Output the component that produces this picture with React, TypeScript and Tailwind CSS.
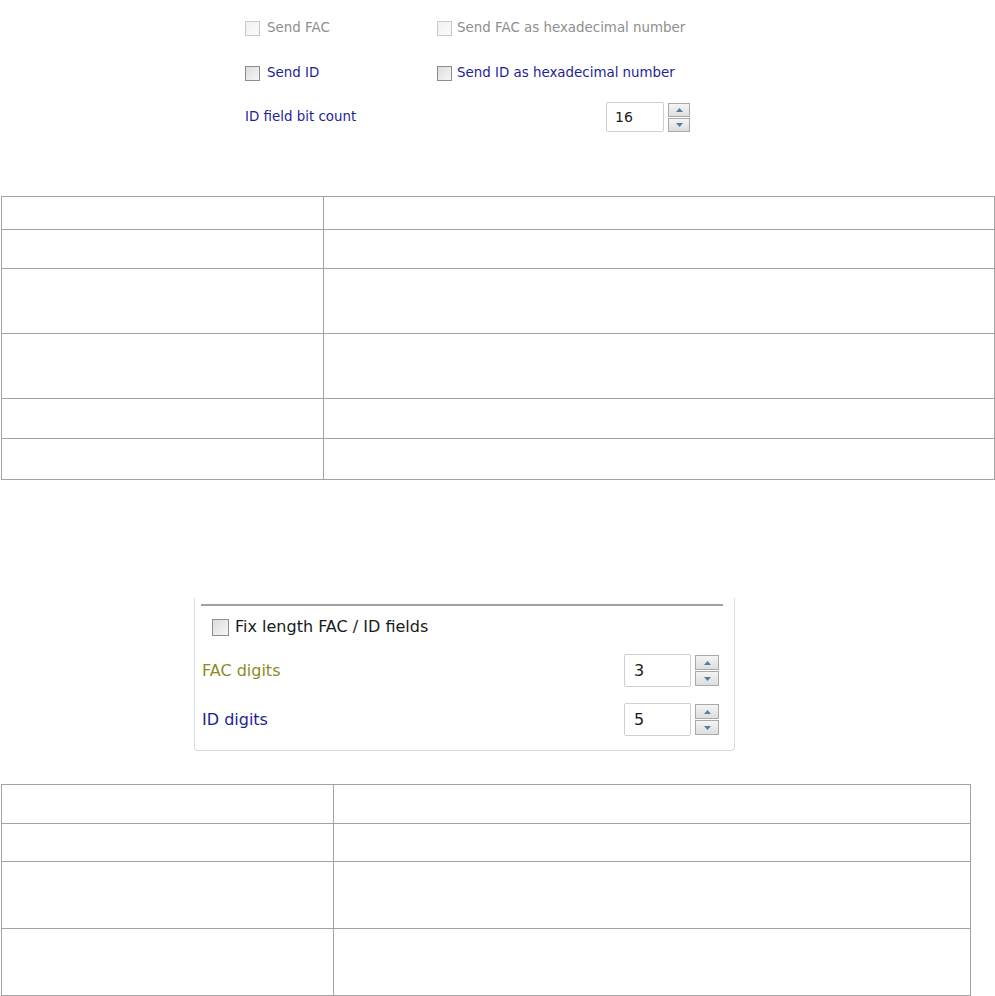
import React from "react";

const Checkbox = ({ disabled = false, big = false }: { disabled?: boolean; big?: boolean }) => (
  <span
    className={
      "inline-block shrink-0 border bg-gradient-to-br from-[#dcdcdc] to-[#f6f6f6] " +
      (big ? "w-[17px] h-[17px] " : "w-[15px] h-[15px] ") +
      (disabled ? "border-[#c8c8c8] from-[#f0f0f0] to-[#fbfbfb]" : "border-[#8e8e8e]")
    }
  />
);

const Arrow = ({ up }: { up?: boolean }) => (
  <svg width="7" height="4" viewBox="0 0 7 4">
    <path d={up ? "M0 4 L3.5 0 L7 4 Z" : "M0 0 L3.5 4 L7 0 Z"} fill="#5a78a8" />
  </svg>
);

const Spin = ({ value, big = false }: { value: string; big?: boolean }) => (
  <div className="flex items-center gap-[4px]">
    <div
      className={
        "flex items-center border border-[#cfcfcf] rounded-[2px] bg-white text-[#1a1a1a] " +
        (big ? "w-[67px] h-[33px] pl-[9px] text-[16px]" : "w-[58px] h-[30px] pl-[8px] text-[14px]")
      }
    >
      {value}
    </div>
    <div className="flex flex-col gap-[1px]">
      <div className={"flex items-center justify-center border border-[#a9a9a9] bg-gradient-to-b from-[#f4f4f4] to-[#dedede] " + (big ? "w-[24px] h-[15px]" : "w-[22px] h-[14px]")}>
        <Arrow up />
      </div>
      <div className={"flex items-center justify-center border border-[#a9a9a9] bg-gradient-to-b from-[#f4f4f4] to-[#dedede] " + (big ? "w-[24px] h-[15px]" : "w-[22px] h-[14px]")}>
        <Arrow />
      </div>
    </div>
  </div>
);

const Table = ({ heights, col, width }: { heights: number[]; col: number; width: number }) => (
  <table className="border-collapse table-fixed" style={{ width }}>
    <tbody>
      {heights.map((h, i) => (
        <tr key={i} style={{ height: h }}>
          <td className="border border-[#a3a3a3] p-0" style={{ width: col }} />
          <td className="border border-[#a3a3a3] p-0" />
        </tr>
      ))}
    </tbody>
  </table>
);

export default function App() {
  return (
    <div className="w-[995px] h-[996px] bg-white overflow-hidden" style={{ fontFamily: "'DejaVu Sans', Verdana, sans-serif" }}>
      <div className="pt-[19px] pl-[245px] text-[13.4px] w-[690px]">
        <div className="flex items-center h-[18px]">
          <div className="flex items-center gap-[7px] w-[192px] text-[#8e8e8e]">
            <Checkbox disabled />
            <span>Send FAC</span>
          </div>
          <div className="flex items-center gap-[5px] text-[#8e8e8e]">
            <Checkbox disabled />
            <span>Send FAC as hexadecimal number</span>
          </div>
        </div>
        <div className="flex items-center h-[18px] mt-[27px]">
          <div className="flex items-center gap-[7px] w-[192px] text-[#1e1e96]">
            <Checkbox />
            <span>Send ID</span>
          </div>
          <div className="flex items-center gap-[5px] text-[#1e1e96]">
            <Checkbox />
            <span>Send ID as hexadecimal number</span>
          </div>
        </div>
        <div className="flex items-center justify-between h-[30px] mt-[20px] text-[#1e1e96]">
          <span>ID field bit count</span>
          <Spin value="16" />
        </div>
      </div>

      <div className="mt-[64px] pl-[1px]">
        <Table heights={[33, 39, 65, 65, 40, 41]} col={322} width={994} />
      </div>

      <div className="mt-[118px] ml-[194px] w-[541px] h-[153px] border border-t-0 border-[#d3dde6] rounded-b-[4px] pt-[6px] px-[7px] text-[16px]">
        <div className="-ml-[1px] mr-[4px] border-t-2 border-[#a0a0a0]" />
        <div className="flex items-center gap-[6px] mt-[9px] ml-[10px] text-[#1a1a1a]">
          <Checkbox big />
          <span>Fix length FAC / ID fields</span>
        </div>
        <div className="flex items-center justify-between mt-[15px] mr-[8px] text-[#8c8c1e]">
          <span>FAC digits</span>
          <Spin value="3" big />
        </div>
        <div className="flex items-center justify-between mt-[16px] mr-[8px] text-[#1e1e96]">
          <span>ID digits</span>
          <Spin value="5" big />
        </div>
      </div>

      <div className="mt-[33px] pl-[1px]">
        <Table heights={[39, 38, 67, 67]} col={332} width={970} />
      </div>
    </div>
  );
}
